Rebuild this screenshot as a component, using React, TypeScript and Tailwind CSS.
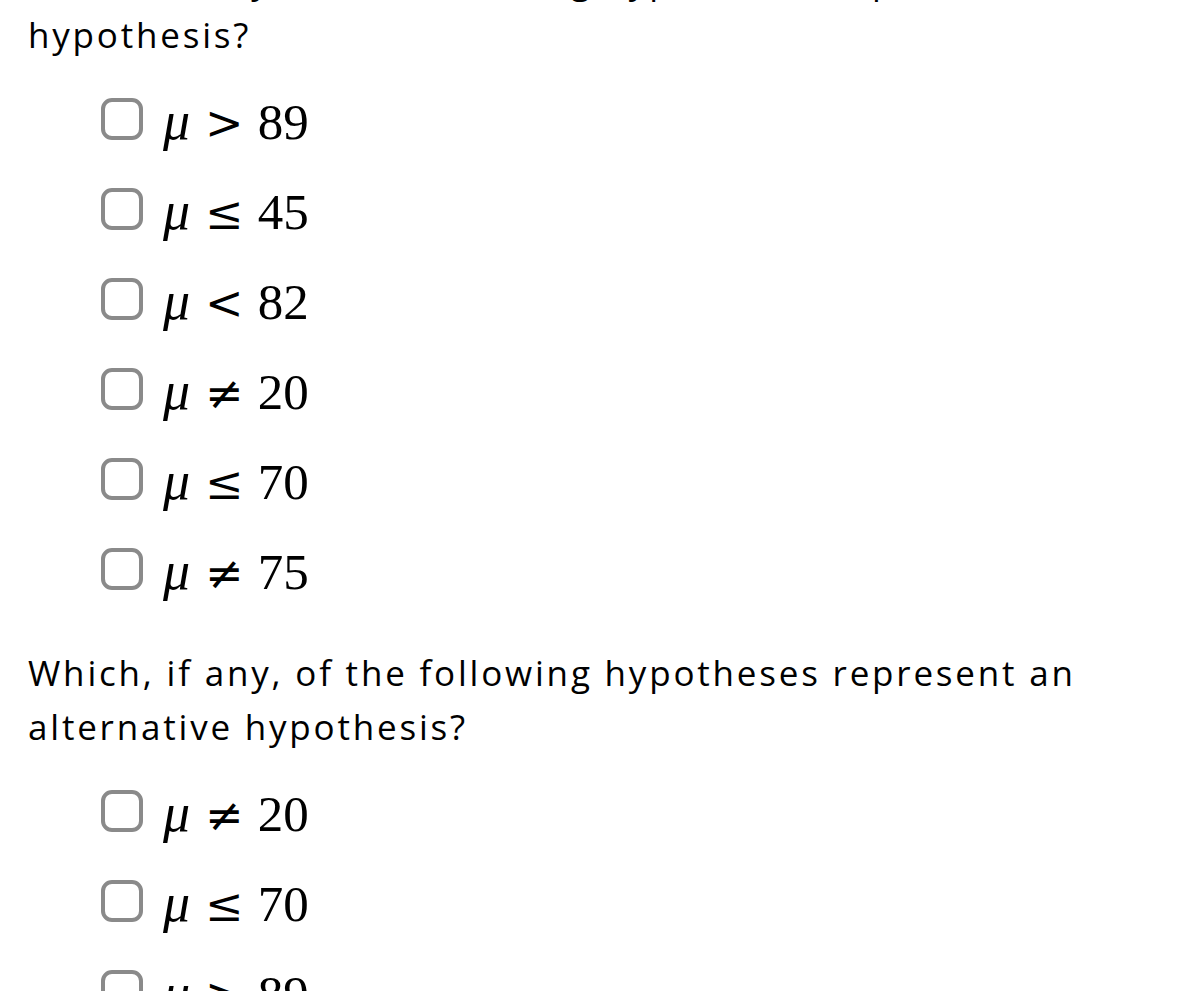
const nullOptions = [
  { rel: '>', num: '89' },
  { rel: '≤', num: '45' },
  { rel: '<', num: '82' },
  { rel: '≠', num: '20' },
  { rel: '≤', num: '70' },
  { rel: '≠', num: '75' },
];

const altOptions = [
  { rel: '≠', num: '20' },
  { rel: '≤', num: '70' },
  { rel: '>', num: '89' },
];

function Option({ rel, num }: { rel: string; num: string }) {
  return (
    <label className="flex h-[90px] items-center">
      <span className="h-[42px] w-[42px] shrink-0 rounded-[11px] border-[4px] border-[#8a8a8a] bg-white" />
      <span className="ml-[20px] mt-[3px] flex items-baseline font-['Liberation_Serif',serif] text-[51px] leading-none text-black">
        <span className="text-[54px] italic">μ</span>
        <span className="ml-[15px] mr-[14px] font-['DejaVu_Serif',serif] text-[46px]">{rel}</span>
        <span>{num}</span>
      </span>
    </label>
  );
}

function Question({ text, options }: { text: string; options: { rel: string; num: string }[] }) {
  return (
    <section>
      <p className="pl-[28px] text-[35px] leading-[54px] tracking-[0.08em] text-black">{text}</p>
      <div className="mt-[12px] pl-[101px]">
        {options.map((o, i) => (
          <Option key={i} rel={o.rel} num={o.num} />
        ))}
      </div>
    </section>
  );
}

export default function App() {
  return (
    <div className="h-[991px] overflow-hidden bg-white font-['Open_Sans',sans-serif]">
      <div className="-mt-[46px] flex flex-col gap-[32px]">
        <Question
          text="Which, if any, of the following hypotheses represent a null hypothesis?"
          options={nullOptions}
        />
        <Question
          text="Which, if any, of the following hypotheses represent an alternative hypothesis?"
          options={altOptions}
        />
      </div>
    </div>
  );
}
